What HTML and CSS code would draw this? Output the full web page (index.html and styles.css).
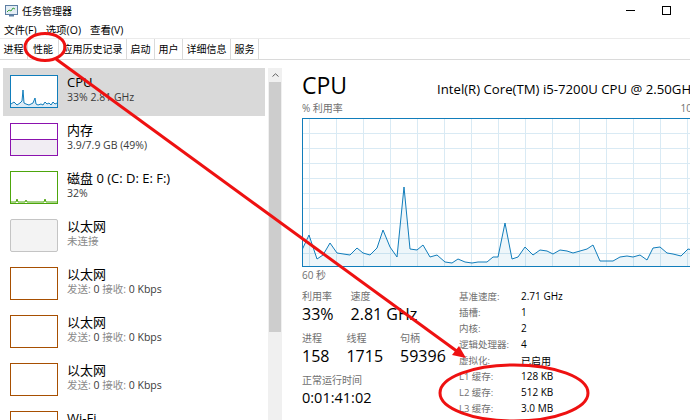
FILE: index.html
```html
<!DOCTYPE html>
<html lang="zh-CN">
<head>
<meta charset="utf-8">
<title>任务管理器</title>
<link rel="stylesheet" href="styles.css">
</head>
<body>
<div class="window">
  <div class="titlebar">
    <svg class="app-icon" viewBox="0 0 13 12" width="13" height="12">
      <rect x="0.5" y="0.5" width="12" height="9" fill="#e4edf5" stroke="#5c7ea3"/>
      <polyline points="2,7 4,5 6,6 8,3 10,4" fill="none" stroke="#3aa13a" stroke-width="1"/>
      <rect x="4" y="10" width="5" height="1.5" fill="#5c7ea3"/>
    </svg>
    <span class="title">任务管理器</span>
    <div class="win-controls">
      <div class="win-btn"><span class="min"></span></div>
      <div class="win-btn"><span class="max"></span></div>
    </div>
  </div>

  <div class="menubar">
    <span>文件(F)</span><span>选项(O)</span><span>查看(V)</span>
  </div>

  <div class="tabs">
    <div class="tab">进程</div>
    <div class="tab active">性能</div>
    <div class="tab">应用历史记录</div>
    <div class="tab">启动</div>
    <div class="tab">用户</div>
    <div class="tab">详细信息</div>
    <div class="tab">服务</div>
  </div>

  <div class="main">
    <div class="sidebar">
      <div class="list">
        <div class="item selected">
          <div class="thumb thumb-cpu">
            <svg viewBox="0 0 46 31" width="46" height="31">
              <polygon fill="#dcebf6" points="0,31 0,28 3,26 6,29 9,27 11,25 12,14 13,27 15,28 18,29 20,28 22,27 24,22 25,28 27,29 30,28 32,29 34,26 36,28 38,27 40,29 42,26 44,28 46,27 46,31"/>
              <polyline fill="none" stroke="#117dbb" stroke-width="1" points="0,28 3,26 6,29 9,27 11,25 12,14 13,27 15,28 18,29 20,28 22,27 24,22 25,28 27,29 30,28 32,29 34,26 36,28 38,27 40,29 42,26 44,28 46,27"/>
            </svg>
          </div>
          <div class="item-text">
            <div class="item-title">CPU</div>
            <div class="item-sub"><span class="v">33%</span> <span class="v">2.81 GHz</span></div>
          </div>
        </div>
        <div class="item">
          <div class="thumb thumb-mem"><div class="mem-fill"></div></div>
          <div class="item-text">
            <div class="item-title">内存</div>
            <div class="item-sub"><span class="v">3.9/7.9 GB (49%)</span></div>
          </div>
        </div>
        <div class="item">
          <div class="thumb thumb-disk">
            <svg viewBox="0 0 46 31" width="46" height="31">
              <polyline fill="none" stroke="#4da60c" stroke-width="1" points="0,30 5,30 6,27 7,30 14,30 15,28 16,30 33,30 34,27 35,30 46,30"/>
            </svg>
          </div>
          <div class="item-text">
            <div class="item-title">磁盘 0 (C: D: E: F:)</div>
            <div class="item-sub"><span class="v">32%</span></div>
          </div>
        </div>
        <div class="item">
          <div class="thumb thumb-off"></div>
          <div class="item-text">
            <div class="item-title">以太网</div>
            <div class="item-sub">未连接</div>
          </div>
        </div>
        <div class="item">
          <div class="thumb thumb-eth"></div>
          <div class="item-text">
            <div class="item-title">以太网</div>
            <div class="item-sub">发送: <span class="v">0</span> 接收: <span class="v">0 Kbps</span></div>
          </div>
        </div>
        <div class="item">
          <div class="thumb thumb-eth"></div>
          <div class="item-text">
            <div class="item-title">以太网</div>
            <div class="item-sub">发送: <span class="v">0</span> 接收: <span class="v">0 Kbps</span></div>
          </div>
        </div>
        <div class="item">
          <div class="thumb thumb-eth"></div>
          <div class="item-text">
            <div class="item-title">以太网</div>
            <div class="item-sub">发送: <span class="v">0</span> 接收: <span class="v">0 Kbps</span></div>
          </div>
        </div>
        <div class="item">
          <div class="thumb thumb-eth"></div>
          <div class="item-text">
            <div class="item-title">Wi-Fi</div>
            <div class="item-sub">发送: <span class="v">0</span> 接收: <span class="v">0 Kbps</span></div>
          </div>
        </div>
      </div>
      <div class="scrollbar">
        <div class="sb-arrow">
          <svg viewBox="0 0 7 4" width="7" height="4"><polyline points="0.5,3.5 3.5,0.8 6.5,3.5" fill="none" stroke="#606060" stroke-width="1"/></svg>
        </div>
        <div class="sb-thumb"></div>
      </div>
    </div>

    <div class="detail">
      <div class="header">
        <div class="big-title">CPU</div>
        <div class="model">Intel(R) Core(TM) i5-7200U CPU @ 2.50GHz</div>
      </div>
      <div class="axis-row">
        <span>% 利用率</span><span>100%</span>
      </div>
      <div class="graph">
        <svg viewBox="0 0 404 149" width="404" height="149">
          <g stroke="#d9eaf4" stroke-width="1">
            <line x1="7.5" y1="0" x2="7.5" y2="149"/>
            <line x1="34.5" y1="0" x2="34.5" y2="149"/>
            <line x1="61.5" y1="0" x2="61.5" y2="149"/>
            <line x1="88.5" y1="0" x2="88.5" y2="149"/>
            <line x1="115.5" y1="0" x2="115.5" y2="149"/>
            <line x1="142.5" y1="0" x2="142.5" y2="149"/>
            <line x1="169.5" y1="0" x2="169.5" y2="149"/>
            <line x1="196.5" y1="0" x2="196.5" y2="149"/>
            <line x1="223.5" y1="0" x2="223.5" y2="149"/>
            <line x1="250.5" y1="0" x2="250.5" y2="149"/>
            <line x1="277.5" y1="0" x2="277.5" y2="149"/>
            <line x1="304.5" y1="0" x2="304.5" y2="149"/>
            <line x1="331.5" y1="0" x2="331.5" y2="149"/>
            <line x1="358.5" y1="0" x2="358.5" y2="149"/>
            <line x1="385.5" y1="0" x2="385.5" y2="149"/>
            <line x1="0" y1="15.5" x2="404" y2="15.5"/>
            <line x1="0" y1="30.5" x2="404" y2="30.5"/>
            <line x1="0" y1="45.5" x2="404" y2="45.5"/>
            <line x1="0" y1="60.5" x2="404" y2="60.5"/>
            <line x1="0" y1="75.5" x2="404" y2="75.5"/>
            <line x1="0" y1="90.5" x2="404" y2="90.5"/>
            <line x1="0" y1="105.5" x2="404" y2="105.5"/>
            <line x1="0" y1="120.5" x2="404" y2="120.5"/>
            <line x1="0" y1="135.5" x2="404" y2="135.5"/>
          </g>
          <polygon fill="#117dbb" fill-opacity="0.07" points="0,149 0,132 7,117 15,141 21,137 28,125 35,135 48,137 55,130 61,135 68,137 75,130 81,112 88,129 95,139 102,69 108,131 115,132 121,127 128,139 135,137 143,144 150,145 156,141 163,144 170,145 176,144 185,144 191,139 196,139 203,105 210,141 216,139 223,129 231,137 238,132 245,133 251,136 258,132 265,133 271,135 278,133 285,131 291,127 298,143 305,143 311,143 318,139 325,138 331,139 338,137 345,142 351,130 358,129 365,135 371,136 379,138 386,131 395,133 404,132 404,149"/>
          <polyline fill="none" stroke="#117dbb" stroke-width="1" stroke-linejoin="round" points="0,132 7,117 15,141 21,137 28,125 35,135 48,137 55,130 61,135 68,137 75,130 81,112 88,129 95,139 102,69 108,131 115,132 121,127 128,139 135,137 143,144 150,145 156,141 163,144 170,145 176,144 185,144 191,139 196,139 203,105 210,141 216,139 223,129 231,137 238,132 245,133 251,136 258,132 265,133 271,135 278,133 285,131 291,127 298,143 305,143 311,143 318,139 325,138 331,139 338,137 345,142 351,130 358,129 365,135 371,136 379,138 386,131 395,133 404,132"/>
          <rect x="0.5" y="0.5" width="403" height="148" fill="none" stroke="#117dbb" stroke-width="1"/>
        </svg>
      </div>
      <div class="axis-row bottom">
        <span>60 秒</span>
      </div>

      <div class="stats">
        <div class="stats-left">
          <div class="stat-row">
            <div class="stat"><div class="stat-label">利用率</div><div class="stat-value">33%</div></div>
            <div class="stat"><div class="stat-label">速度</div><div class="stat-value">2.81 GHz</div></div>
          </div>
          <div class="stat-row">
            <div class="stat"><div class="stat-label">进程</div><div class="stat-value">158</div></div>
            <div class="stat"><div class="stat-label">线程</div><div class="stat-value">1715</div></div>
            <div class="stat"><div class="stat-label">句柄</div><div class="stat-value">59396</div></div>
          </div>
          <div class="stat-row">
            <div class="stat"><div class="stat-label">正常运行时间</div><div class="stat-value uptime">0:01:41:02</div></div>
          </div>
        </div>
        <div class="specs">
          <span class="spec-label">基准速度:</span><span class="spec-value">2.71 GHz</span>
          <span class="spec-label">插槽:</span><span class="spec-value">1</span>
          <span class="spec-label">内核:</span><span class="spec-value">2</span>
          <span class="spec-label">逻辑处理器:</span><span class="spec-value">4</span>
          <span class="spec-label">虚拟化:</span><span class="spec-value">已启用</span>
          <span class="spec-label">L1 缓存:</span><span class="spec-value">128 KB</span>
          <span class="spec-label">L2 缓存:</span><span class="spec-value">512 KB</span>
          <span class="spec-label">L3 缓存:</span><span class="spec-value">3.0 MB</span>
        </div>
      </div>
    </div>
  </div>

  <svg class="annot" viewBox="0 0 690 420" width="690" height="420">
    <ellipse cx="45" cy="47" rx="20" ry="13.5" fill="none" stroke="#ee1111" stroke-width="3"/>
    <line x1="56" y1="59" x2="458" y2="352" stroke="#ee1111" stroke-width="3"/>
    <polygon points="466,358 452,355 459,346" fill="#ee1111"/>
    <ellipse cx="514" cy="393" rx="74" ry="28" fill="none" stroke="#ee1111" stroke-width="3"/>
  </svg>
</div>
</body>
</html>
```

FILE: styles.css
```css
* { box-sizing: border-box; }

html, body {
  margin: 0;
  padding: 0;
  background: #ffffff;
}

body {
  width: 690px;
  height: 420px;
  overflow: hidden;
  font-family: "Segoe UI", "Open Sans", "Noto Sans CJK SC", sans-serif;
  color: #000;
}

.window {
  position: relative;
  width: 690px;
  height: 420px;
  overflow: hidden;
  display: flex;
  flex-direction: column;
}

/* title bar */
.titlebar {
  height: 22px;
  display: flex;
  align-items: center;
  flex-shrink: 0;
}
.app-icon { margin-left: 5px; margin-right: 4px; }
.title { font-size: 10px; line-height: 14px; color: #000; }
.win-controls {
  margin-left: auto;
  display: flex;
  padding-right: 6px;
  height: 20px;
  align-self: flex-start;
}
.win-btn {
  width: 36px;
  height: 20px;
  display: flex;
  align-items: center;
  justify-content: center;
}
.min { width: 9px; height: 1px; background: #000; }
.max { width: 9px; height: 9px; border: 1px solid #000; }

/* menu */
.menubar {
  height: 16px;
  display: flex;
  gap: 9px;
  padding-left: 4px;
  font-size: 10.5px;
  line-height: 16px;
  flex-shrink: 0;
}

/* tabs */
.tabs {
  height: 22px;
  display: flex;
  border-top: 1px solid #ebebeb;
  border-bottom: 1px solid #dadada;
  flex-shrink: 0;
}
.tab {
  padding: 0 3.5px;
  font-size: 10px;
  line-height: 21px;
  border-right: 1px solid #dadada;
}
.tab.active { background: #fff; padding: 0 5px; }

/* main */
.main {
  flex: 1;
  display: flex;
  min-height: 0;
}

.sidebar {
  width: 282px;
  flex-shrink: 0;
  display: flex;
  padding-top: 8px;
}
.list {
  width: 265px;
  padding-left: 3px;
}
.item {
  display: flex;
  height: 48px;
  padding-left: 7px;
}
.item.selected { background: #d9d9d9; }
.thumb {
  width: 48px;
  height: 33px;
  margin-top: 7px;
  border: 1px solid #117dbb;
  background: #fff;
  flex-shrink: 0;
  position: relative;
  overflow: hidden;
}
.thumb svg { display: block; }
.thumb-mem { border-color: #8b12ae; }
.mem-fill {
  position: absolute;
  left: 0; right: 0; bottom: 0;
  height: 16px;
  background: #f1edf3;
  border-top: 1px solid #8b12ae;
}
.thumb-disk { border-color: #4da60c; }
.thumb-off { border-color: #c4c4c4; background: #f3f3f3; border-radius: 2px; }
.thumb-eth { border-color: #a74f01; }

.item-text {
  margin-left: 9px;
  padding-top: 6px;
  white-space: nowrap;
}
.item-title { font-size: 13px; line-height: 16px; }
.item-sub { font-size: 10.5px; line-height: 14px; color: #8a8a8a; }
.item-sub .v { color: #3a3a3a; }

.scrollbar {
  width: 14px;
  margin-left: 3px;
  background: #f0f0f0;
  display: flex;
  flex-direction: column;
}
.sb-arrow {
  height: 14px;
  display: flex;
  align-items: center;
  justify-content: center;
}
.sb-arrow svg { display: block; }
.sb-thumb {
  height: 250px;
  margin: 0 1px;
  background: #cdcdcd;
}

/* detail */
.detail {
  flex: 1;
  padding-left: 20px;
  min-width: 0;
  white-space: nowrap;
}
.header {
  margin-top: 10px;
  display: flex;
  gap: 91px;
  align-items: baseline;
  height: 30px;
}
.big-title { font-size: 23px; line-height: 30px; width: 44px; flex-shrink: 0; }
.model { font-size: 13.2px; line-height: 30px; }

.axis-row {
  width: 404px;
  margin-top: 1px;
  display: flex;
  justify-content: space-between;
  font-size: 10px;
  line-height: 14px;
  height: 14px;
  color: #707070;
}
.axis-row.bottom { margin-top: 1px; }

.graph {
  margin-top: 3px;
  width: 404px;
  height: 149px;
}
.graph svg { display: block; }

.stats {
  margin-top: 7px;
  display: flex;
}
.stats-left {
  width: 157px;
  flex-shrink: 0;
  display: flex;
  flex-direction: column;
  gap: 6px;
}
.stat-row {
  display: flex;
  column-gap: 17px;
}
.stat-label {
  font-size: 10px;
  line-height: 14px;
  color: #707070;
}
.stat-value {
  font-size: 16px;
  line-height: 22px;
}
.stat-value.uptime { font-size: 14.5px; }

.specs {
  display: grid;
  grid-template-columns: 62px auto;
  grid-auto-rows: 16px;
  margin-top: -1px;
  align-items: center;
}
.spec-label { font-size: 9.5px; color: #707070; }
.spec-value { font-size: 10px; color: #000; }

/* red annotation overlay */
.annot {
  position: absolute;
  left: 0;
  top: 0;
  pointer-events: none;
}
```
